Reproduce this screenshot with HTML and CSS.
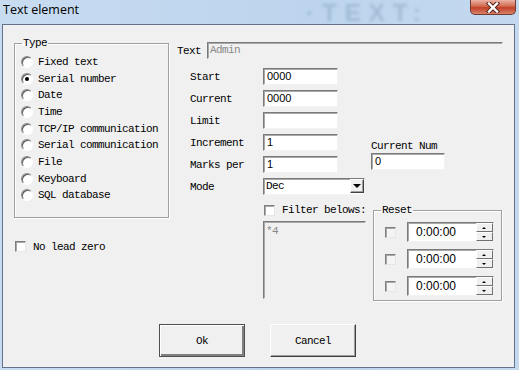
FILE: index.html
```html
<!DOCTYPE html>
<html>
<head>
	<meta charset="UTF-8">
	<title>Text element</title>
	<link rel="stylesheet" href="styles.css">
</head>
<body>
	<div class="window">
		<div class="titlebar">
			<span class="caption">Text element</span>
			<span class="watermark">·TEXT:</span>
			<button type="button" class="close">
				<svg width="16" height="11" viewBox="0 0 16 11">
					<path d="M4 1.5 L12 9.5 M12 1.5 L4 9.5" stroke="#5a2620" stroke-width="4.4" stroke-linecap="square"/>
					<path d="M4 1.5 L12 9.5 M12 1.5 L4 9.5" stroke="#ffffff" stroke-width="2.4" stroke-linecap="square"/>
				</svg>
			</button>
		</div>

		<div class="client">
			<div class="main">
				<div class="left">
					<fieldset class="group type-group">
						<legend>Type</legend>
						<label class="radio-row"><span class="radio"></span>Fixed text</label>
						<label class="radio-row"><span class="radio checked"></span>Serial number</label>
						<label class="radio-row"><span class="radio"></span>Date</label>
						<label class="radio-row"><span class="radio"></span>Time</label>
						<label class="radio-row"><span class="radio"></span>TCP/IP communication</label>
						<label class="radio-row"><span class="radio"></span>Serial communication</label>
						<label class="radio-row"><span class="radio"></span>File</label>
						<label class="radio-row"><span class="radio"></span>Keyboard</label>
						<label class="radio-row"><span class="radio"></span>SQL database</label>
					</fieldset>
					<label class="check-row lead-zero"><span class="check"></span>No lead zero</label>
				</div>

				<div class="right">
					<div class="text-row">
						<span class="text-label">Text</span>
						<div class="field disabled">Admin</div>
					</div>

					<div class="fields">
						<span class="lbl">Start</span>
						<div class="field sans">0000</div>
						<span class="lbl">Current</span>
						<div class="field sans">0000</div>
						<span class="lbl">Limit</span>
						<div class="field sans"></div>
						<span class="lbl">Increment</span>
						<div class="field sans">1</div>
						<span class="lbl cur-num-label">Current Num</span>
						<span class="lbl">Marks per</span>
						<div class="field sans">1</div>
						<div class="field sans cur-num">0</div>
						<span class="lbl">Mode</span>
						<div class="field select">Dec<span class="drop"></span></div>
					</div>

					<div class="lower">
						<div class="filter">
							<label class="check-row"><span class="check"></span>Filter belows:</label>
							<div class="listbox">*4</div>
						</div>
						<fieldset class="group reset">
							<legend>Reset</legend>
							<div class="reset-row"><span class="check dim"></span><div class="time">0:00:00<span class="spin"><i class="up"></i><i class="down"></i></span></div></div>
							<div class="reset-row"><span class="check dim"></span><div class="time">0:00:00<span class="spin"><i class="up"></i><i class="down"></i></span></div></div>
							<div class="reset-row"><span class="check dim"></span><div class="time">0:00:00<span class="spin"><i class="up"></i><i class="down"></i></span></div></div>
						</fieldset>
					</div>
				</div>
			</div>

			<div class="buttons">
				<button type="button" class="btn default">Ok</button>
				<button type="button" class="btn">Cancel</button>
			</div>
		</div>
	</div>
</body>
</html>
```

FILE: styles.css
```css
* {
	margin: 0;
	padding: 0;
	box-sizing: border-box;
}

body {
	width: 519px;
	height: 370px;
	overflow: hidden;
	font-family: "Liberation Mono", monospace;
	font-size: 11px;
	letter-spacing: -0.6px;
	color: #000000;
}

.window {
	height: 370px;
	display: flex;
	flex-direction: column;
	background: linear-gradient(90deg, #c8dcf1, #bcd4ed 60%, #c4d9ef);
}

/* title bar */
.titlebar {
	position: relative;
	height: 24px;
	display: flex;
	align-items: flex-start;
}

.caption {
	font-family: "Open Sans", sans-serif;
	font-size: 12.5px;
	letter-spacing: 0;
	line-height: 20px;
	padding-left: 3px;
}

.watermark {
	position: absolute;
	left: 306px;
	top: 1px;
	font-family: "Liberation Sans", sans-serif;
	font-weight: bold;
	font-size: 24px;
	line-height: 24px;
	letter-spacing: 8px;
	color: rgba(60, 85, 120, 0.2);
	filter: blur(1.4px);
}

.close {
	position: relative;
	margin-left: auto;
	margin-right: 3px;
	width: 46px;
	height: 15px;
	border: 1px solid #6e3a34;
	border-top: none;
	border-radius: 0 0 5px 5px;
	background: linear-gradient(#eab3a6, #d2694f 45%, #c24128 55%, #d9826a);
	display: flex;
	align-items: center;
	justify-content: center;
}

/* client area */
.client {
	position: relative;
	height: 344px;
	margin: 0 4px 0 2px;
	border: 1px solid #62738a;
	background-color: #f0f0f0;
	display: flex;
	flex-direction: column;
}

.main {
	display: flex;
	padding: 12px 0 0 11px;
}

.left {
	width: 155px;
	display: flex;
	flex-direction: column;
}

.group {
	border: 1px solid #a0a0a0;
	box-shadow: 1px 1px 0 #ffffff, inset 1px 1px 0 #ffffff;
	min-width: 0;
}

.group legend {
	line-height: 12px;
	padding: 0 1px;
}

.type-group {
	padding: 4.6px 0 13px 6px;
}

.type-group legend {
	margin-left: 1px;
}

.radio-row {
	height: 16.7px;
	display: flex;
	align-items: center;
}

.radio {
	width: 12px;
	height: 12px;
	margin-right: 5px;
	border-radius: 50%;
	border: 1px solid;
	border-color: #8a8a8a #ffffff #ffffff #8a8a8a;
	box-shadow: inset 1px 1px 0 #5a5a5a;
	background-color: #ffffff;
	position: relative;
}

.radio.checked:after {
	content: "";
	position: absolute;
	left: 3px;
	top: 3px;
	width: 4px;
	height: 4px;
	border-radius: 50%;
	background-color: #000000;
}

.check-row {
	height: 12px;
	display: flex;
	align-items: center;
}

.check {
	width: 11px;
	height: 11px;
	margin-right: 7px;
	border: 1px solid;
	border-color: #808080 #e6e6e6 #e6e6e6 #808080;
	box-shadow: inset 1px 1px 0 #a8a8a8;
	background-color: #ffffff;
}

.check.dim {
	background-color: #f4f4f4;
	margin-right: 11px;
}

.lead-zero {
	margin: 23px 0 0 1px;
}

/* right column */
.right {
	width: 327px;
	margin-left: 7px;
	padding-top: 5px;
}

.text-row {
	display: flex;
	align-items: center;
}

.text-label {
	width: 31px;
	padding-left: 1px;
}

.field {
	height: 17px;
	border: 1px solid;
	border-color: #7a7a7a #f2f2f2 #f2f2f2 #7a7a7a;
	box-shadow: inset 1px 1px 0 #a9a9a9;
	background-color: #ffffff;
	padding-left: 2px;
	line-height: 15px;
	white-space: nowrap;
}

.field.disabled {
	width: 296px;
	background-color: #f0f0f0;
	color: #8a8a8a;
}

.field.sans {
	font-family: "Liberation Sans", sans-serif;
	font-size: 11px;
	letter-spacing: 0;
	padding-left: 3px;
}

.fields {
	display: grid;
	grid-template-columns: 73px 75px 33px 74px;
	grid-template-rows: repeat(6, 17px);
	row-gap: 5px;
	margin: 9px 0 0 14px;
}

.lbl {
	grid-column: 1;
	align-self: center;
	line-height: 12px;
}

.fields .field {
	grid-column: 2;
}

.fields .cur-num-label {
	grid-column: 4;
	grid-row: 4;
	align-self: end;
	margin-bottom: -1px;
}

.fields .cur-num {
	grid-column: 4;
	grid-row: 5;
	margin-top: -3px;
}

.fields .select {
	grid-column: 2 / 4;
	width: 102px;
	position: relative;
	padding-left: 2px;
}

.drop {
	position: absolute;
	right: 0;
	top: 0;
	width: 14px;
	height: 14px;
	border: 1px solid;
	border-color: #ffffff #404040 #404040 #ffffff;
	box-shadow: inset -1px -1px 0 #a0a0a0;
	background-color: #f0f0f0;
}

.drop:after {
	content: "";
	position: absolute;
	left: 2px;
	top: 4px;
	border-top: 4px solid #000000;
	border-left: 4px solid transparent;
	border-right: 4px solid transparent;
}

.lower {
	display: flex;
	margin: 9px 0 0 87px;
}

.filter {
	width: 103px;
}

.filter .check {
	margin-left: 1px;
}

.listbox {
	height: 78px;
	margin-top: 5px;
	border: 1px solid;
	border-color: #7a7a7a #f2f2f2 #f2f2f2 #7a7a7a;
	box-shadow: inset 1px 1px 0 #a9a9a9;
	padding: 3px 0 0 2px;
	color: #8a8a8a;
	line-height: 12px;
}

.reset {
	width: 129px;
	margin-left: 7px;
	padding: 6px 0 4px 11px;
}

.reset legend {
	margin-left: -4px;
}

.reset-row {
	height: 20px;
	display: flex;
	align-items: center;
	margin-bottom: 7px;
}

.reset-row:last-child {
	margin-bottom: 0;
}

.time {
	width: 87px;
	height: 20px;
	display: flex;
	align-items: center;
	padding-left: 8px;
	border: 1px solid;
	border-color: #7a7a7a #f2f2f2 #f2f2f2 #7a7a7a;
	box-shadow: inset 1px 1px 0 #a9a9a9;
	background-color: #ffffff;
	font-family: "Liberation Sans", sans-serif;
	font-size: 12px;
	letter-spacing: 0;
}

.spin {
	margin-left: auto;
	width: 17px;
	height: 18px;
	display: flex;
	flex-direction: column;
}

.spin i {
	flex: 1;
	position: relative;
	border: 1px solid;
	border-color: #ffffff #707070 #707070 #ffffff;
	background-color: #f0f0f0;
}

.spin i:after {
	content: "";
	position: absolute;
	left: 5px;
	top: 3px;
	border-left: 2px solid transparent;
	border-right: 2px solid transparent;
}

.spin .up:after {
	border-bottom: 2px solid #000000;
}

.spin .down:after {
	border-top: 2px solid #000000;
}

/* bottom buttons */
.buttons {
	display: flex;
	justify-content: center;
	gap: 25px;
	margin-top: 23px;
	padding-right: 2px;
}

.btn {
	width: 86px;
	height: 33px;
	font-family: "Liberation Mono", monospace;
	font-size: 11px;
	letter-spacing: -0.6px;
	background-color: #f0f0f0;
	border: 1px solid;
	border-color: #ffffff #404040 #404040 #ffffff;
	box-shadow: inset -1px -1px 0 #a0a0a0;
	color: #000000;
}

.btn.default {
	border-color: #505050;
	box-shadow: inset 1px 1px 0 #ffffff, inset -2px -2px 0 #808080;
}
```
